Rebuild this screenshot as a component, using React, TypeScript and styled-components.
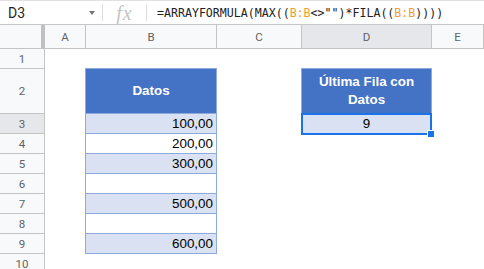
import styled, { createGlobalStyle } from 'styled-components';

const GlobalStyle = createGlobalStyle`
  html, body {
    margin: 0;
    padding: 0;
    background: #ffffff;
    overflow: hidden;
  }
`;

const columns = [
  { name: '', width: 45 },
  { name: 'A', width: 41 },
  { name: 'B', width: 131 },
  { name: 'C', width: 85 },
  { name: 'D', width: 130 },
  { name: 'E', width: 52 },
];

const rowHeights = [45, 20, 20, 20, 20, 20, 20, 20, 20];

const values: Record<number, string> = {
  3: '100,00',
  4: '200,00',
  5: '300,00',
  7: '500,00',
  9: '600,00',
};

const Page = styled.div`
  width: 484px;
  height: 269px;
  overflow: hidden;
  font-family: Roboto, 'Liberation Sans', sans-serif;
`;

const FormulaBar = styled.div`
  display: flex;
  align-items: center;
  height: 23px;
  border-top: 1px solid #e1e1e1;
  border-bottom: 1px solid #c7c7c7;
`;

const NameBox = styled.div`
  display: flex;
  align-items: center;
  justify-content: space-between;
  width: 102px;
  padding-left: 8px;
  font-size: 14px;
  color: #1f1f1f;
  box-sizing: border-box;
`;

const Caret = styled.span`
  width: 0;
  height: 0;
  margin-right: 7px;
  border-left: 3.5px solid transparent;
  border-right: 3.5px solid transparent;
  border-top: 4px solid #757575;
`;

const Divider = styled.div`
  width: 1px;
  height: 17px;
  background: #dadce0;
`;

const FxIcon = styled.div`
  width: 43px;
  text-align: center;
  font-family: 'Liberation Serif', serif;
  font-style: italic;
  font-size: 20px;
  line-height: 20px;
  color: #c4c4c4;
  letter-spacing: 1px;
`;

const Formula = styled.div`
  padding-left: 10px;
  font-family: 'DejaVu Sans Mono', monospace;
  font-size: 11.6px;
  color: #222;
  white-space: nowrap;
`;

const Ref = styled.span`
  color: #f29d2a;
`;

const Grid = styled.div`
  display: grid;
  grid-template-columns: ${columns.map((c) => `${c.width}px`).join(' ')};
  grid-template-rows: 24px 20px ${rowHeights.map((h) => `${h}px`).join(' ')} 20px;
  position: relative;
`;

const ColHeader = styled.div<{ $active?: boolean; $corner?: boolean }>`
  display: flex;
  align-items: center;
  justify-content: center;
  background: ${(p) => (p.$active ? '#e6e7ea' : '#f8f9fa')};
  border-right: ${(p) => (p.$corner ? '4px solid #c0c0c0' : '1px solid #c4c4c4')};
  border-bottom: 1px solid #c4c4c4;
  font-size: 11.5px;
  color: #5f6368;
  box-sizing: border-box;
`;

const RowHeader = styled.div<{ $active?: boolean }>`
  display: flex;
  align-items: center;
  justify-content: center;
  background: ${(p) => (p.$active ? '#e6e7ea' : '#f8f9fa')};
  border-right: 1px solid #c4c4c4;
  border-bottom: 1px solid #c4c4c4;
  font-size: 11.5px;
  color: #5f6368;
  box-sizing: border-box;
`;

const Cell = styled.div`
  background: #ffffff;
`;

const TableCell = styled.div<{ $kind: 'head' | 'band' | 'plain'; $align?: string }>`
  display: flex;
  align-items: center;
  justify-content: ${(p) => p.$align ?? 'flex-end'};
  text-align: center;
  margin: -1px 0 0 -1px;
  padding: 0 3px;
  background: ${(p) => (p.$kind === 'head' ? '#4472c4' : p.$kind === 'band' ? '#d9e1f2' : '#ffffff')};
  border: 1px solid #8eaadb;
  font-family: 'Liberation Sans', Arial, sans-serif;
  font-size: 13.4px;
  font-weight: ${(p) => (p.$kind === 'head' ? 700 : 400)};
  line-height: 18px;
  color: ${(p) => (p.$kind === 'head' ? '#ffffff' : '#000000')};
`;

const Selected = styled(TableCell)`
  position: relative;
  border: 2px solid #1a73e8;
  margin: -1px 0 -1px -1px;
`;

const Handle = styled.span`
  position: absolute;
  right: -5px;
  bottom: -5px;
  width: 6px;
  height: 6px;
  background: #1a73e8;
  border: 1px solid #ffffff;
`;

const formula = (
  <>
    =ARRAYFORMULA(MAX((<Ref>B:B</Ref>&lt;&gt;"")*FILA((<Ref>B:B</Ref>))))
  </>
);

export default function App() {
  const renderRow = (r: number) => {
    const cells = [];
    cells.push(
      <RowHeader key={`h${r}`} $active={r === 3}>
        {r}
      </RowHeader>
    );
    for (let c = 1; c < columns.length; c++) {
      const key = `${r}-${c}`;
      const col = columns[c].name;
      if (col === 'B' && r === 2) {
        cells.push(
          <TableCell key={key} $kind="head" $align="center">
            Datos
          </TableCell>
        );
      } else if (col === 'B' && r >= 3 && r <= 9) {
        cells.push(
          <TableCell key={key} $kind={r % 2 === 1 ? 'band' : 'plain'}>
            {values[r] ?? ''}
          </TableCell>
        );
      } else if (col === 'D' && r === 2) {
        cells.push(
          <TableCell key={key} $kind="head" $align="center">
            Última Fila con
            <br />
            Datos
          </TableCell>
        );
      } else if (col === 'D' && r === 3) {
        cells.push(
          <Selected key={key} $kind="band" $align="center">
            9
            <Handle />
          </Selected>
        );
      } else {
        cells.push(<Cell key={key} />);
      }
    }
    return cells;
  };

  return (
    <Page>
      <GlobalStyle />
      <FormulaBar>
        <NameBox>
          D3
          <Caret />
        </NameBox>
        <Divider />
        <FxIcon>fx</FxIcon>
        <Divider />
        <Formula>{formula}</Formula>
      </FormulaBar>
      <Grid>
        {columns.map((c, i) => (
          <ColHeader key={`c${i}`} $corner={i === 0} $active={c.name === 'D'}>
            {c.name}
          </ColHeader>
        ))}
        {Array.from({ length: 10 }, (_, i) => renderRow(i + 1))}
      </Grid>
    </Page>
  );
}
